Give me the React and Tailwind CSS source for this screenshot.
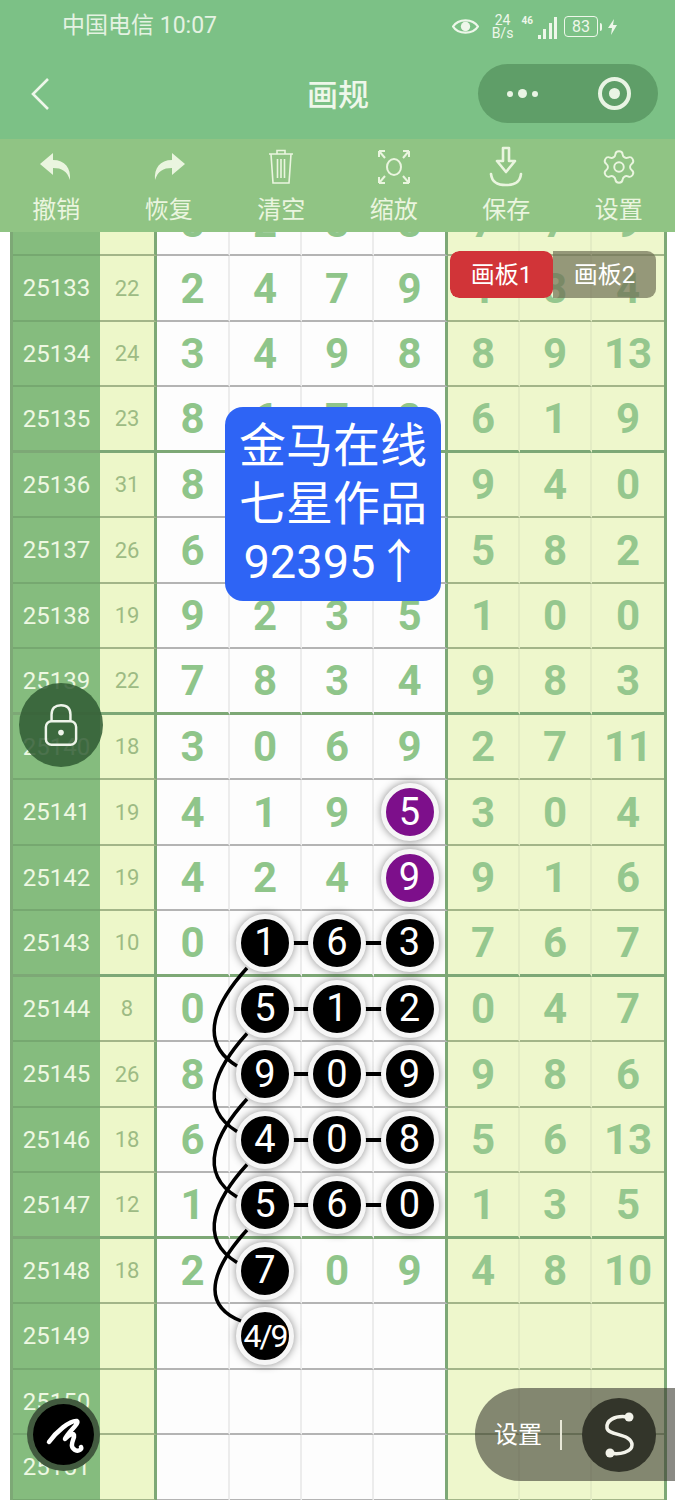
import React from "react";
import { Settings } from "lucide-react";

const rows = [
  { id: "25132", sum: "", main: [8, 2, 8, 8], right: [7, 7, 9] },
  { id: "25133", sum: 22, main: [2, 4, 7, 9], right: [1, 8, 4] },
  { id: "25134", sum: 24, main: [3, 4, 9, 8], right: [8, 9, 13] },
  { id: "25135", sum: 23, main: [8, 6, 7, 2], right: [6, 1, 9], thick: true },
  { id: "25136", sum: 31, main: [8, 7, 9, 7], right: [9, 4, 0] },
  { id: "25137", sum: 26, main: [6, 7, 8, 5], right: [5, 8, 2] },
  { id: "25138", sum: 19, main: [9, 2, 3, 5], right: [1, 0, 0] },
  { id: "25139", sum: 22, main: [7, 8, 3, 4], right: [9, 8, 3], thick: true },
  { id: "25140", sum: 18, main: [3, 0, 6, 9], right: [2, 7, 11] },
  { id: "25141", sum: 19, main: [4, 1, 9, "p5"], right: [3, 0, 4] },
  { id: "25142", sum: 19, main: [4, 2, 4, "p9"], right: [9, 1, 6] },
  { id: "25143", sum: 10, main: [0, "k1", "k6", "k3"], right: [7, 6, 7], thick: true },
  { id: "25144", sum: 8, main: [0, "k5", "k1", "k2"], right: [0, 4, 7] },
  { id: "25145", sum: 26, main: [8, "k9", "k0", "k9"], right: [9, 8, 6] },
  { id: "25146", sum: 18, main: [6, "k4", "k0", "k8"], right: [5, 6, 13] },
  { id: "25147", sum: 12, main: [1, "k5", "k6", "k0"], right: [1, 3, 5], thick: true },
  { id: "25148", sum: 18, main: [2, "s7", 0, 9], right: [4, 8, 10] },
  { id: "25149", sum: "", main: ["", "s4/9", "", ""], right: ["", "", ""] },
  { id: "25150", sum: "", main: ["", "", "", ""], right: ["", "", ""] },
  { id: "25151", sum: "", main: ["", "", "", ""], right: ["", "", ""] },
];

const tools = [
  {
    label: "撤销",
    icon: (
      <svg width="44" height="44" viewBox="0 0 44 44" fill="currentColor">
        <path d="M19 8 L6 19 L19 30 V23 C28 23 33 26 36 35 C37 23 31 15 19 15 Z" />
      </svg>
    ),
  },
  {
    label: "恢复",
    icon: (
      <svg width="44" height="44" viewBox="0 0 44 44" fill="currentColor">
        <path d="M25 8 L38 19 L25 30 V23 C16 23 11 26 8 35 C7 23 13 15 25 15 Z" />
      </svg>
    ),
  },
  {
    label: "清空",
    icon: (
      <svg width="44" height="44" viewBox="0 0 44 44" fill="none" stroke="currentColor" strokeWidth="1.6">
        <path d="M10 9 H34 M18 9 V5.5 H26 V9 M12 9 L14 38 H30 L32 9 M18.5 14 V33 M22 14 V33 M25.5 14 V33" />
      </svg>
    ),
  },
  {
    label: "缩放",
    icon: (
      <svg width="44" height="44" viewBox="0 0 44 44" fill="none" stroke="currentColor" strokeWidth="2">
        <ellipse cx="22" cy="22" rx="7" ry="8" />
        <path d="M7 6 H13 M7 6 V12 M7 6 L13 13 M37 6 H31 M37 6 V12 M37 6 L31 13 M7 38 H13 M7 38 V32 M7 38 L13 31 M37 38 H31 M37 38 V32 M37 38 L31 31" />
      </svg>
    ),
  },
  {
    label: "保存",
    icon: (
      <svg width="44" height="44" viewBox="0 0 44 44" fill="none" stroke="currentColor" strokeWidth="2.6" strokeLinejoin="round" strokeLinecap="round">
        <path d="M19 3 H25 V16 H31 L22 27 L13 16 H19 Z" />
        <path d="M7 29 C8 38 14 40 22 40 C30 40 36 38 37 29" />
      </svg>
    ),
  },
  { label: "设置", icon: <Settings size={38} strokeWidth={1.2} className="mb-[3px]" /> },
];

const rowLine = {
  issue: "border-b-2 border-[#76a870]",
  sum: "border-b-2 border-[#a3b588]",
  main: "border-b-2 border-[#b4b4b4]",
  right: "border-b-2 border-[#a3b588]",
};
const thickLine = "border-b-[3px] border-[#7da876]";
const mainWidth = ["w-[73px]", "w-[72px]", "w-[72px]", "w-[74px]"];

function Ball({ text, link }) {
  const kind = text[0];
  const label = text.slice(1);
  return (
    <div className="relative">
      {link && <div className="absolute left-[55px] top-[27px] h-[4px] w-[20px] bg-black" />}
      <div
        className={
          "relative flex h-[58px] w-[58px] items-center justify-center rounded-full border-[5px] border-[#f6f6f6] font-normal text-white shadow-[0_0_9px_rgba(0,0,0,0.45)] " +
          (kind === "p" ? "bg-[#7d0f8b]" : "bg-black")
        }
      >
        <span className={label.length > 1 ? "text-[32px] tracking-[-2px]" : "text-[38px]"}>{label}</span>
      </div>
    </div>
  );
}

function Row({ row }) {
  return (
    <div className="flex h-[65.5px]">
      <div className={`flex w-[87px] items-center justify-center bg-[#85bc7e] pt-[1px] text-[24px] text-[#eef8e2] ${row.thick ? thickLine : rowLine.issue}`}>
        {row.id}
      </div>
      <div className={`flex w-[57px] items-center justify-center border-r-[3px] border-r-[#7da876] bg-[#edf7c9] pt-[1px] text-[22px] text-[#9dbb84] ${row.thick ? thickLine : rowLine.sum}`}>
        {row.sum}
      </div>
      {row.main.map((v, i) => (
        <div
          key={i}
          className={`flex items-center justify-center bg-[#fdfdfd] pt-[1px] text-[42px] font-bold text-[#8fc58a] ${mainWidth[i]} ${
            i === 3 ? "border-r-[3px] border-r-[#7da876]" : "border-r-2 border-r-[#ececec]"
          } ${row.thick ? thickLine : rowLine.main}`}
        >
          {typeof v === "string" && v !== "" ? <Ball text={v} link={v[0] === "k" && i < 3} /> : v}
        </div>
      ))}
      {row.right.map((v, i) => (
        <div
          key={i}
          className={`flex w-[72px] items-center justify-center bg-[#eef7cc] pt-[1px] text-[42px] font-bold text-[#95c78e] ${
            i < 2 ? "border-r-2 border-r-[#e3ecc4]" : ""
          } ${row.thick ? thickLine : rowLine.right}`}
        >
          {v}
        </div>
      ))}
    </div>
  );
}

function Curves() {
  // each curve hops two rows, row pitch is 65.5
  const offsets = [0, 1, 2, 3, 4];
  return (
    <svg className="absolute left-0 top-0 z-10" width="300" height="1500" fill="none" stroke="#000" strokeWidth="3.5">
      {offsets.map((n) => {
        const d = n * 65.5;
        const endY = n === 4 ? 1059 + d : 1066 + d;
        const endX = n === 4 ? 241 : 237;
        return <path key={n} d={`M247 ${968 + d} C217 ${1001 + d} 196 ${1041 + d} ${endX} ${endY}`} />;
      })}
    </svg>
  );
}

export default function App() {
  return (
    <div className="relative flex h-[1500px] w-[675px] flex-col overflow-hidden bg-white font-['Roboto','Noto_Sans_CJK_SC',sans-serif]">
      {/* top bars */}
      <header className="relative z-20 bg-[#7cc186] text-[#eef7ea]">
        <div className="flex h-[50px] items-center justify-between pl-[62px] pr-[58px] pt-[3px]">
          <span className="text-[23px] text-[#e4f2e2]">中国电信 10:07</span>
          <div className="flex items-center">
            <svg width="27" height="19" viewBox="0 0 26 18" fill="none" stroke="currentColor" strokeWidth="2.2">
              <path d="M1 9 C6 1 20 1 25 9 C20 17 6 17 1 9 Z" />
              <circle cx="13" cy="9" r="4.5" fill="currentColor" stroke="none" />
            </svg>
            <div className="ml-[13px] w-[22px] text-center text-[14px] leading-[13px]">
              24
              <br />
              B/s
            </div>
            <div className="ml-[8px] flex h-[24px] items-end gap-[2.5px]">
              <div className="mr-[2px] self-start text-[10px] font-bold leading-[12px]">46</div>
              <div className="h-[4px] w-[3px] bg-current" />
              <div className="h-[10px] w-[3px] bg-current" />
              <div className="h-[16px] w-[3px] bg-current" />
              <div className="h-[22px] w-[3px] bg-current" />
            </div>
            <div className="ml-[7px] flex h-[21px] w-[34px] items-center justify-center rounded-[4px] border-[1.5px] border-current text-[16px] leading-none">
              83
            </div>
            <div className="ml-[2px] h-[8px] w-[2px] rounded-r bg-current" />
            <svg className="ml-[6px]" width="9" height="16" viewBox="0 0 9 16" fill="currentColor">
              <path d="M6 0 L0 9 H4 L3 16 L9 6 H5 Z" />
            </svg>
          </div>
        </div>
        <div className="flex h-[89px] items-start pl-[30px] pr-[17px]">
          <div className="flex-1">
            <svg className="mt-[27px]" width="20" height="34" viewBox="0 0 20 34" fill="none" stroke="currentColor" strokeWidth="2.6">
              <path d="M18 2 L3 17 L18 32" />
            </svg>
          </div>
          <span className="mr-[12px] mt-[23px] text-[31px] font-medium leading-[45px]">画规</span>
          <div className="flex flex-1 justify-end">
            <div className="mt-[14px] flex h-[59px] w-[180px] shrink-0 items-center rounded-full bg-[#5f9e68] pl-[29px]">
              <div className="flex items-center gap-[5px]">
                <div className="h-[6px] w-[6px] rounded-full bg-[#e9f4e4]" />
                <div className="h-[9px] w-[9px] rounded-full bg-[#e9f4e4]" />
                <div className="h-[6px] w-[6px] rounded-full bg-[#e9f4e4]" />
              </div>
              <div className="ml-[60px] flex h-[33px] w-[33px] items-center justify-center rounded-full border-[4px] border-[#e9f4e4]">
                <div className="h-[11px] w-[11px] rounded-full bg-[#e9f4e4]" />
              </div>
            </div>
          </div>
        </div>
        <div className="grid h-[93px] grid-cols-6 bg-[#90c484] text-[#eaf5df]">
          {tools.map((t) => (
            <div key={t.label} className="flex flex-col items-center">
              <div className="flex h-[50px] items-end justify-center">{t.icon}</div>
              <span className="mt-[4px] text-[24px] leading-[34px]">{t.label}</span>
            </div>
          ))}
        </div>
      </header>

      {/* board, scrolled so the first row is cut off under the toolbar */}
      <main className="relative min-h-0 flex-1 overflow-hidden">
        <div className="ml-[10px] mt-[-41.5px] w-[651px] border-x-[3px] border-[#7da876] box-content">
          {rows.map((row) => (
            <Row key={row.id} row={row} />
          ))}
        </div>
      </main>

      <Curves />

      {/* board tabs */}
      <div className="absolute left-[450px] top-[251px] z-20 flex h-[47px] w-[206px] overflow-hidden rounded-[9px] text-[24px] text-white">
        <div className="flex w-[103px] items-center justify-center rounded-[9px] bg-[#d13438]">画板1</div>
        <div className="flex w-[103px] items-center justify-center bg-[#6f6f55]/70">画板2</div>
      </div>

      {/* author card */}
      <div className="absolute left-[225px] top-[407px] z-20 flex h-[194px] w-[216px] flex-col items-center justify-center rounded-[18px] bg-[#2e64f5] text-[47px] leading-[58px] text-white">
        <div>金马在线</div>
        <div>七星作品</div>
        <div>92395↑</div>
      </div>

      {/* lock */}
      <div className="absolute left-[19px] top-[683px] z-20 flex h-[84px] w-[84px] items-center justify-center rounded-full bg-[#2f5a32]/85">
        <svg width="34" height="46" viewBox="0 0 36 46" fill="none" stroke="#eef4ea" strokeWidth="2.6">
          <path d="M8 19 V12 C8 5 12 2 18 2 C24 2 28 5 28 12 V19" />
          <rect x="2" y="19" width="32" height="25" rx="6" />
          <circle cx="18" cy="31" r="3" fill="#eef4ea" stroke="none" />
        </svg>
      </div>

      {/* pen button */}
      <div className="absolute left-[27px] top-[1398px] z-20 flex h-[73px] w-[73px] items-center justify-center rounded-full border-[6px] border-[#52704f]/80 bg-black">
        <svg width="44" height="40" viewBox="0 0 44 40" fill="none" stroke="#fff" strokeWidth="4.5" strokeLinecap="round" strokeLinejoin="round">
          <path d="M7 27 C14 17 28 5 35 6 C38 8 25 18 23 24 C27 20 33 16 32 22 C30 28 28 32 33 35 C37 37 40 34 39 32" />
        </svg>
      </div>

      {/* settings pill */}
      <div className="absolute left-[475px] top-[1388px] z-20 flex h-[93px] w-[200px] items-center rounded-l-[46px] bg-[#3c3c32]/60 pl-[19px] text-white">
        <span className="text-[24px]">设置</span>
        <div className="ml-[18px] h-[30px] w-[2px] bg-[#e8e8d8]" />
        <div className="ml-[20px] flex h-[74px] w-[74px] items-center justify-center rounded-full bg-[#33352a]">
          <svg width="74" height="74" viewBox="0 0 74 74" fill="none" stroke="#f3f3ea" strokeWidth="3.5">
            <path d="M46 19 C32 17 24 23 25 30 C26 38 50 35 50 47 C50 54 38 57 28 55" />
            <circle cx="47" cy="19" r="4.5" fill="#f3f3ea" stroke="none" />
            <circle cx="28" cy="55" r="4.5" fill="#f3f3ea" stroke="none" />
          </svg>
        </div>
      </div>
    </div>
  );
}
